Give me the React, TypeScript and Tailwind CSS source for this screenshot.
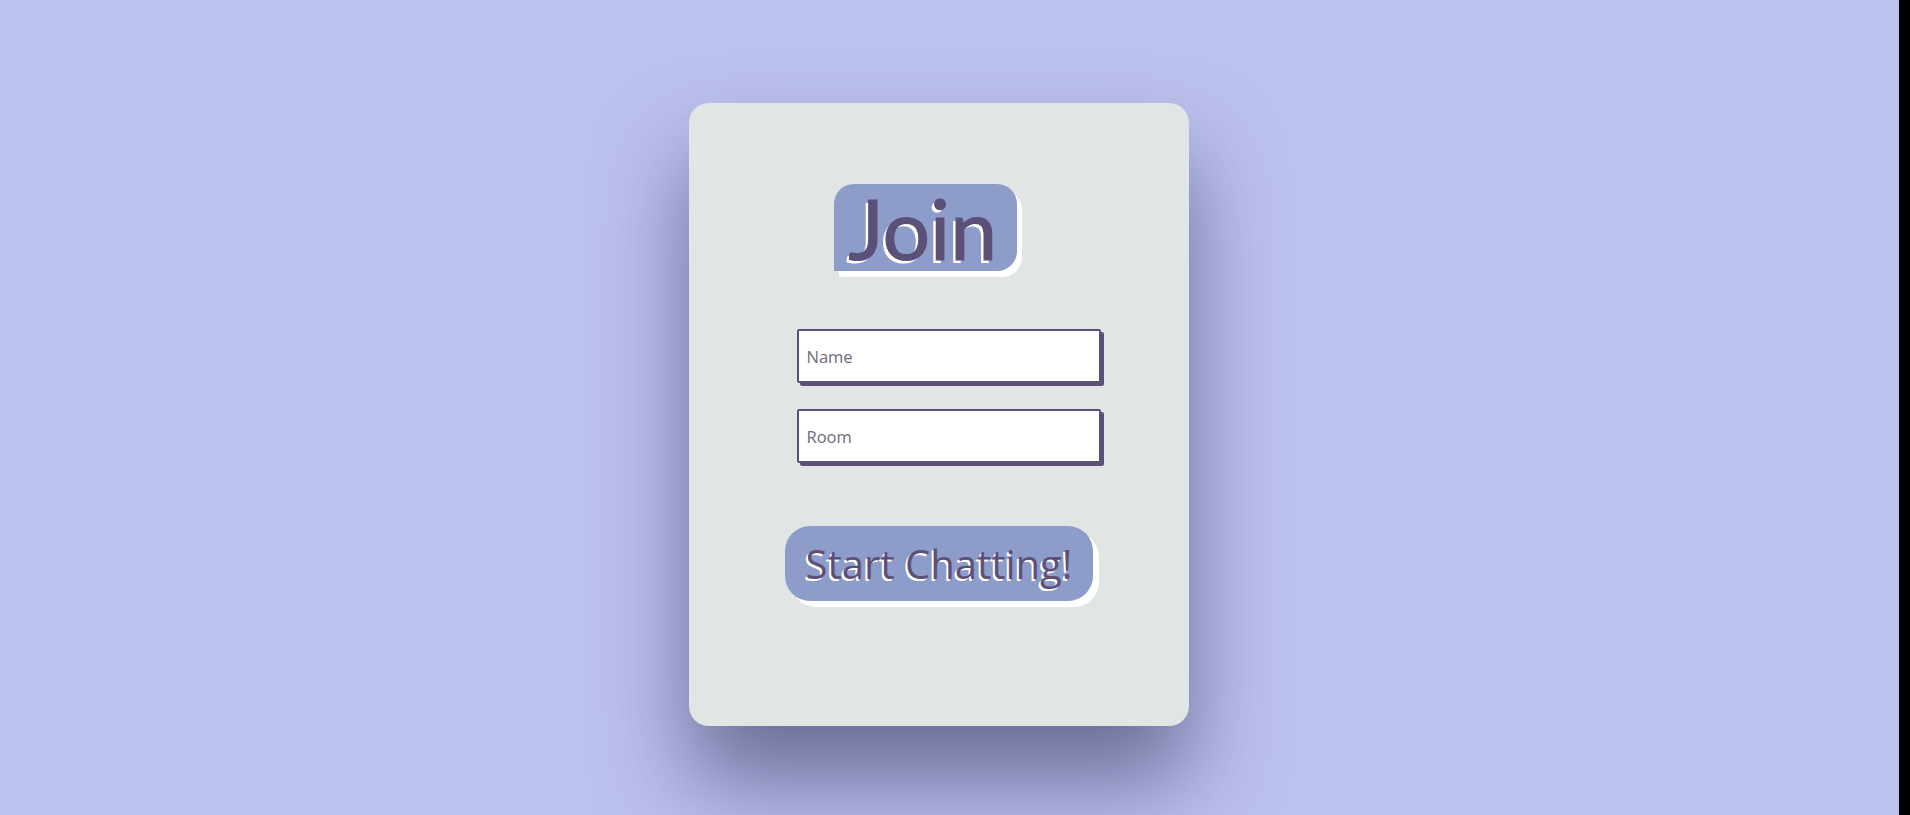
import React from "react";

export default function App() {
  const font = { fontFamily: '"Open Sans", "Noto Sans", sans-serif' };
  return (
    <div className="flex h-[815px] w-full overflow-hidden" style={font}>
      <div className="flex flex-1 justify-center bg-[#bdc1ee] pr-[21px] pt-[103px]">
        <div className="flex h-[623px] w-[500px] flex-col items-center rounded-[20px] bg-[#e1e5e3] pt-[81px] shadow-[0_55px_90px_rgba(40,40,80,0.55)]">
          <div className="mr-[28px] flex h-[87px] w-[183px] items-center rounded-[20px] rounded-bl-none bg-[#8d9cc8] pl-[15px] shadow-[5px_6px_0_#ffffff]">
            <h1 className="font-['Lato',sans-serif] text-[84px] font-normal leading-none text-[#5a5078] [-webkit-text-stroke:1.2px_#5a5078] [text-shadow:-3px_3px_0_#ffffff]">
              Join
            </h1>
          </div>
          <div className="ml-[19px] mt-[58px] flex flex-col gap-[26px]">
            <input
              placeholder="Name"
              className="h-[54px] w-[304px] rounded-[2px] border-2 border-[#5a5078] bg-white px-[8px] text-[16.5px] text-[#333] shadow-[3px_3px_0_#5a5078] outline-none placeholder:text-[#6b6b7c]"
            />
            <input
              placeholder="Room"
              className="h-[54px] w-[304px] rounded-[2px] border-2 border-[#5a5078] bg-white px-[8px] text-[16.5px] text-[#333] shadow-[3px_3px_0_#5a5078] outline-none placeholder:text-[#6b6b7c]"
            />
          </div>
          <button className="mt-[63px] flex h-[75px] w-[308px] items-center justify-center rounded-[25px] bg-[#8d9cc8] text-[40px] text-[#5a5078] shadow-[6px_6px_0_#ffffff] [text-shadow:-2px_2px_0_#ffffff]">
            Start Chatting!
          </button>
        </div>
      </div>
      <div className="h-full w-[11px] bg-black" />
    </div>
  );
}
